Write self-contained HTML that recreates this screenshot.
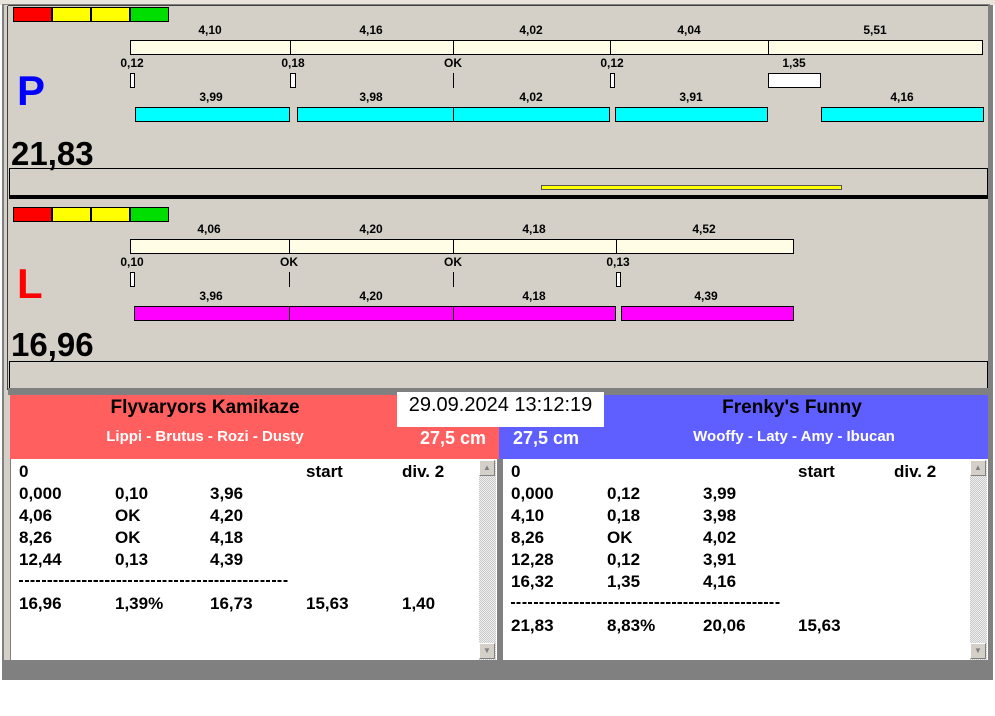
<!DOCTYPE html>
<html><head><meta charset="utf-8"><style>
*{margin:0;padding:0;box-sizing:border-box}
body{width:995px;height:716px;background:#fff;position:relative;overflow:hidden;font-family:"Liberation Sans",Arial,sans-serif;font-weight:bold}
div{position:absolute}
.b{border:1px solid #000}
.cr{background:#fffde6;border:1px solid #000}
.cy{background:#00ffff;border:1px solid #000}
.mg{background:#ff00ff;border:1px solid #000}
.wm{background:#fff;border:1px solid #000}
.vl{width:1px;background:#000}
.lb{font-size:12px;width:60px;text-align:center;margin-left:-30px;color:#000;line-height:12px}
.row{font-size:17px;line-height:22px;color:#000}
.sb{background:repeating-conic-gradient(#c8c8c8 0 25%,#f0f0f0 0 50%) 0 0/2px 2px}
.btn{width:16px;height:16px;background:#d4d0c8;border:1px solid;border-color:#fff #808080 #808080 #fff;font-size:8px;color:#808080;text-align:center;line-height:14px}
.dash{height:2px;background:repeating-linear-gradient(90deg,#000 0 4px,transparent 4px 5.75px)}
</style></head><body>
<div style="left:0;top:0;width:995px;height:5px;background:#e8e4dc"></div>
<div style="left:2px;top:4px;width:988px;height:676px;background:#808080"></div>
<div style="left:4px;top:5px;width:984px;height:655px;background:#d4d0c8"></div>
<div style="left:7px;top:6px;width:1px;height:384px;background:#404040"></div>
<div style="left:8px;top:5px;width:980px;height:1px;background:#404040"></div>
<div style="left:988px;top:5px;width:7px;height:675px;background:#808080"></div>
<div style="left:993px;top:5px;width:2px;height:680px;background:#fff"></div>

<div style="left:13px;top:7px;width:39px;height:15px;background:#f00" class="b"></div>
<div style="left:52px;top:7px;width:39px;height:15px;background:#ff0" class="b"></div>
<div style="left:91px;top:7px;width:39px;height:15px;background:#ff0" class="b"></div>
<div style="left:130px;top:7px;width:39px;height:15px;background:#0d0" class="b"></div>

<div class="lb" style="left:210px;top:24px">4,10</div>
<div class="lb" style="left:371px;top:24px">4,16</div>
<div class="lb" style="left:531px;top:24px">4,02</div>
<div class="lb" style="left:689px;top:24px">4,04</div>
<div class="lb" style="left:875px;top:24px">5,51</div>
<div class="cr" style="left:130px;top:40px;width:853px;height:15px"></div>
<div class="vl" style="left:290px;top:40px;height:15px"></div>
<div class="vl" style="left:453px;top:40px;height:15px"></div>
<div class="vl" style="left:610px;top:40px;height:15px"></div>
<div class="vl" style="left:768px;top:40px;height:15px"></div>

<div class="lb" style="left:132px;top:57px">0,12</div>
<div class="lb" style="left:293px;top:57px">0,18</div>
<div class="lb" style="left:453px;top:57px">OK</div>
<div class="lb" style="left:612px;top:57px">0,12</div>
<div class="lb" style="left:794px;top:57px">1,35</div>
<div class="wm" style="left:130px;top:73px;width:5px;height:15px"></div>
<div class="wm" style="left:290px;top:73px;width:6px;height:15px"></div>
<div class="vl" style="left:453px;top:73px;height:15px"></div>
<div class="wm" style="left:610px;top:73px;width:5px;height:15px"></div>
<div class="wm" style="left:768px;top:73px;width:53px;height:15px"></div>

<div class="lb" style="left:211px;top:91px">3,99</div>
<div class="lb" style="left:371px;top:91px">3,98</div>
<div class="lb" style="left:531px;top:91px">4,02</div>
<div class="lb" style="left:691px;top:91px">3,91</div>
<div class="lb" style="left:902px;top:91px">4,16</div>
<div class="cy" style="left:135px;top:107px;width:155px;height:15px"></div>
<div class="cy" style="left:297px;top:107px;width:157px;height:15px"></div>
<div class="cy" style="left:453px;top:107px;width:157px;height:15px"></div>
<div class="cy" style="left:615px;top:107px;width:153px;height:15px"></div>
<div class="cy" style="left:821px;top:107px;width:163px;height:15px"></div>

<div style="left:17px;top:68px;font-size:42px;color:#0000ff;line-height:46px">P</div>
<div style="left:11px;top:135px;font-size:33px;color:#000;line-height:38px">21,83</div>
<div style="left:9px;top:168px;width:979px;height:28px;border-top:1px solid #000;border-right:1px solid #000;border-left:1px solid #000"></div>
<div style="left:541px;top:185px;width:301px;height:5px;background:#ff0;border:1px solid #555"></div>
<div style="left:9px;top:195px;width:979px;height:4px;background:#000"></div>

<div style="left:13px;top:207px;width:39px;height:15px;background:#f00" class="b"></div>
<div style="left:52px;top:207px;width:39px;height:15px;background:#ff0" class="b"></div>
<div style="left:91px;top:207px;width:39px;height:15px;background:#ff0" class="b"></div>
<div style="left:130px;top:207px;width:39px;height:15px;background:#0d0" class="b"></div>

<div class="lb" style="left:209px;top:223px">4,06</div>
<div class="lb" style="left:371px;top:223px">4,20</div>
<div class="lb" style="left:534px;top:223px">4,18</div>
<div class="lb" style="left:704px;top:223px">4,52</div>
<div class="cr" style="left:130px;top:239px;width:664px;height:15px"></div>
<div class="vl" style="left:289px;top:239px;height:15px"></div>
<div class="vl" style="left:453px;top:239px;height:15px"></div>
<div class="vl" style="left:616px;top:239px;height:15px"></div>

<div class="lb" style="left:132px;top:256px">0,10</div>
<div class="lb" style="left:289px;top:256px">OK</div>
<div class="lb" style="left:453px;top:256px">OK</div>
<div class="lb" style="left:618px;top:256px">0,13</div>
<div class="wm" style="left:130px;top:272px;width:5px;height:15px"></div>
<div class="vl" style="left:289px;top:272px;height:15px"></div>
<div class="vl" style="left:453px;top:272px;height:15px"></div>
<div class="wm" style="left:616px;top:272px;width:5px;height:15px"></div>

<div class="lb" style="left:211px;top:290px">3,96</div>
<div class="lb" style="left:371px;top:290px">4,20</div>
<div class="lb" style="left:534px;top:290px">4,18</div>
<div class="lb" style="left:706px;top:290px">4,39</div>
<div class="mg" style="left:134px;top:306px;width:156px;height:15px"></div>
<div class="mg" style="left:289px;top:306px;width:165px;height:15px"></div>
<div class="mg" style="left:453px;top:306px;width:163px;height:15px"></div>
<div class="mg" style="left:621px;top:306px;width:173px;height:15px"></div>

<div style="left:17px;top:261px;font-size:42px;color:#f00;line-height:46px">L</div>
<div style="left:11px;top:326px;font-size:33px;color:#000;line-height:38px">16,96</div>
<div style="left:9px;top:361px;width:979px;height:28px;border-top:1px solid #000;border-right:1px solid #000;border-left:1px solid #000"></div>
<div style="left:8px;top:388px;width:981px;height:7px;background:#808080"></div>

<div style="left:10px;top:395px;width:489px;height:64px;background:#ff5f5f"></div>
<div style="left:499px;top:395px;width:489px;height:64px;background:#5f5fff"></div>
<div style="left:10px;top:397px;width:390px;text-align:center;font-size:19px;color:#000">Flyvaryors Kamikaze</div>
<div style="left:10px;top:428px;width:390px;text-align:center;font-size:15px;color:#fff">Lippi - Brutus - Rozi - Dusty</div>
<div style="left:597px;top:397px;width:390px;text-align:center;font-size:19px;color:#000">Frenky's Funny</div>
<div style="left:597px;top:428px;width:394px;text-align:center;font-size:15px;color:#fff">Wooffy - Laty - Amy - Ibucan</div>
<div style="left:397px;top:392px;width:207px;height:35px;background:#fff;font-weight:normal;font-size:20px;line-height:26px;text-align:center;color:#000">29.09.2024 13:12:19</div>
<div style="left:400px;top:428px;width:86px;text-align:right;font-size:18px;color:#fff">27,5 cm</div>
<div style="left:513px;top:428px;font-size:18px;color:#fff">27,5 cm</div>

<div style="left:10px;top:459px;width:487px;height:201px;background:#fff;border-left:1px solid #808080"></div>
<div class="sb" style="left:479px;top:460px;width:17px;height:200px"></div>
<div class="btn" style="left:479px;top:460px">▲</div>
<div class="btn" style="left:479px;top:643px">▼</div>
<div style="left:497px;top:459px;width:5px;height:201px;background:#808080"></div>
<div style="left:502px;top:459px;width:486px;height:201px;background:#fff;border-left:1px solid #808080"></div>
<div class="sb" style="left:970px;top:460px;width:17px;height:200px"></div>
<div class="btn" style="left:970px;top:460px">▲</div>
<div class="btn" style="left:970px;top:643px">▼</div>

<div class="row" style="left:19px;top:461px">0</div>
<div class="row" style="left:306px;top:461px">start</div>
<div class="row" style="left:402px;top:461px">div. 2</div>
<div class="row" style="left:19px;top:483px;width:300px">0,000<span style="position:absolute;left:96px">0,10</span><span style="position:absolute;left:191px">3,96</span></div>
<div class="row" style="left:19px;top:505px;width:300px">4,06<span style="position:absolute;left:96px">OK</span><span style="position:absolute;left:191px">4,20</span></div>
<div class="row" style="left:19px;top:527px;width:300px">8,26<span style="position:absolute;left:96px">OK</span><span style="position:absolute;left:191px">4,18</span></div>
<div class="row" style="left:19px;top:549px;width:300px">12,44<span style="position:absolute;left:96px">0,13</span><span style="position:absolute;left:191px">4,39</span></div>
<div class="dash" style="left:19px;top:580px;width:270px"></div>
<div class="row" style="left:19px;top:593px;width:450px">16,96<span style="position:absolute;left:96px">1,39%</span><span style="position:absolute;left:191px">16,73</span><span style="position:absolute;left:287px">15,63</span><span style="position:absolute;left:383px">1,40</span></div>

<div class="row" style="left:511px;top:461px">0</div>
<div class="row" style="left:798px;top:461px">start</div>
<div class="row" style="left:894px;top:461px">div. 2</div>
<div class="row" style="left:511px;top:483px;width:300px">0,000<span style="position:absolute;left:96px">0,12</span><span style="position:absolute;left:192px">3,99</span></div>
<div class="row" style="left:511px;top:505px;width:300px">4,10<span style="position:absolute;left:96px">0,18</span><span style="position:absolute;left:192px">3,98</span></div>
<div class="row" style="left:511px;top:527px;width:300px">8,26<span style="position:absolute;left:96px">OK</span><span style="position:absolute;left:192px">4,02</span></div>
<div class="row" style="left:511px;top:549px;width:300px">12,28<span style="position:absolute;left:96px">0,12</span><span style="position:absolute;left:192px">3,91</span></div>
<div class="row" style="left:511px;top:571px;width:300px">16,32<span style="position:absolute;left:96px">1,35</span><span style="position:absolute;left:192px">4,16</span></div>
<div class="dash" style="left:511px;top:602px;width:270px"></div>
<div class="row" style="left:511px;top:615px;width:400px">21,83<span style="position:absolute;left:96px">8,83%</span><span style="position:absolute;left:192px">20,06</span><span style="position:absolute;left:287px">15,63</span></div>
</body></html>
